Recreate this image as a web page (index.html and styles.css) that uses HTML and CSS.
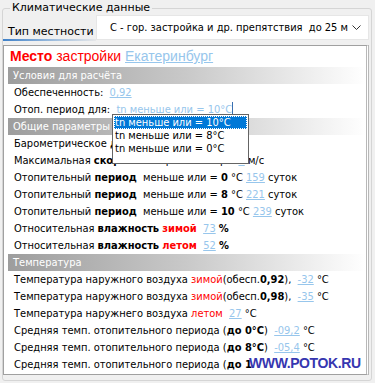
FILE: index.html
```html
<!DOCTYPE html>
<html lang="ru">
<head>
<meta charset="utf-8">
<link rel="stylesheet" href="styles.css">
</head>
<body>
<fieldset class="group">
  <legend class="legend">Климатические данные</legend>
  <div class="typebar">
    <div class="tab">Тип местности</div>
    <div class="combo">
      <span class="combo-text">С - гор. застройка и др. препятствия&nbsp; до 25 м</span>
      <svg class="chev" width="9" height="5" viewBox="0 0 9 5"><path d="M0.5 0.5 L4.5 4.5 L8.5 0.5" fill="none" stroke="#333" stroke-width="1"/></svg>
    </div>
  </div>
  <div class="panel">
    <div class="place"><b class="red">Место</b> <span class="red">застройки</span> <span class="link">Екатеринбург</span></div>

    <div class="head">Условия для расчёта</div>
    <div class="row">Обеспеченность:&nbsp; <span class="link">0,92</span></div>
    <div class="row">Отоп. период для:&nbsp; <span class="val">tn меньше или = 10°С</span><span class="caret"></span></div>

    <div class="head">Общие параметры</div>
    <div class="row">Барометрическое <b>давление</b> 990 гПа</div>
    <div class="row">Максимальная <b>скорость</b> ветра за январь&nbsp; <span class="link">4</span> м/с</div>
    <div class="row">Отопительный <b>период</b>&nbsp; меньше или = <b>0</b> °С <span class="link">159</span> суток</div>
    <div class="row">Отопительный <b>период</b>&nbsp; меньше или = <b>8</b> °С <span class="link">221</span> суток</div>
    <div class="row">Отопительный <b>период</b>&nbsp; меньше или = <b>10</b> °С <span class="link">239</span> суток</div>
    <div class="row">Относительная <b>влажность</b> <b class="red">зимой</b>&nbsp; <span class="link">73</span> <b>%</b></div>
    <div class="row">Относительная <b>влажность</b> <b class="red">летом</b>&nbsp; <span class="link">52</span> <b>%</b></div>

    <div class="head">Температура</div>
    <div class="row">Температура наружного воздуха <span class="red">зимой</span>(обесп.<b>0,92</b>),&nbsp; <span class="link">-32</span> °С</div>
    <div class="row">Температура наружного воздуха <span class="red">зимой</span>(обесп.<b>0,98</b>),&nbsp; <span class="link">-35</span> °С</div>
    <div class="row">Температура наружнего воздуха <span class="red">летом</span>&nbsp; <span class="link">27</span> °С</div>
    <div class="row">Средняя темп. отопительного периода (<b>до 0°С</b>)&nbsp; <span class="link">-09,2</span> °С</div>
    <div class="row">Средняя темп. отопительного периода (<b>до 8°С</b>)&nbsp; <span class="link">-05,4</span> °С</div>
    <div class="row">Средняя темп. отопительного периода (<b>до 1</b></div>

    <ul class="dropdown">
      <li class="sel">tn меньше или = 10°С</li>
      <li>tn меньше или = 8°С</li>
      <li>tn меньше или = 0°С</li>
    </ul>
    <div class="watermark">WWW.POTOK.RU</div>
  </div>
</fieldset>
</body>
</html>
```
FILE: styles.css
```css
html, body {
  margin: 0;
  padding: 0;
  background: #f0f0f0;
}
body {
  font-family: "DejaVu Sans Condensed", "DejaVu Sans", sans-serif;
  font-size: 11px;
  color: #000;
  width: 375px;
  height: 383px;
  overflow: hidden;
}
.group {
  margin: 2px 3px 0 2px;
  padding: 0;
  border: 1px solid #d5d5d5;
  border-radius: 3px;
  height: 379px;
  box-sizing: border-box;
  min-width: 0;
}
.legend {
  margin-left: 7px;
  padding: 0 2px 0 2px;
  line-height: 12px;
  color: #000;
  font-family: "DejaVu Sans", sans-serif;
}
.typebar {
  display: flex;
  align-items: flex-end;
  height: 31px;
  margin-top: -4px;
}
.tab {
  width: 93px;
  height: 18px;
  line-height: 18px;
  padding-left: 5px;
  box-sizing: border-box;
  font-family: "DejaVu Sans", sans-serif;
  border-bottom: 2px solid #5a8fc8;
  border-image: linear-gradient(to right, #3c7fc8, #a9c4e0 60%, #e8e8e8) 1;
}
.combo {
  flex: 1;
  height: 23px;
  margin-bottom: 1px;
  margin-right: 2px;
  background: #fff;
  border: 1px solid #e6e6e6;
  display: flex;
  align-items: center;
  padding: 0 7px 0 13px;
}
.combo-text { flex: 1; white-space: pre; }
.chev { display: block; }
.panel {
  position: relative;
  margin: 4px 2px 0 0;
  background: #fff;
  border: 1px solid #a0a0a0;
  border-right: 3px double #b8b8b8;
  height: 328px;
  padding: 0 0 0 4px;
}
.place {
  height: 21px;
  line-height: 21px;
  font-size: 14px;
  font-family: "Liberation Sans", Arial, sans-serif;
  padding-left: 2px;
}
.red { color: #ff0000; }
.place b.red { font-weight: bold; }
.link {
  color: #97c6ec;
  text-decoration: underline;
}
.val { color: #97c6ec; }
.caret {
  display: inline-block;
  width: 1px;
  height: 13px;
  background: #3a6fb0;
  vertical-align: -2px;
}
.head {
  height: 17px;
  line-height: 17px;
  padding-left: 5px;
  color: #fff;
  background: linear-gradient(to right, #9d9d9d 0%, #c9c9c9 50%, #ffffff 100%);
}
.row {
  height: 17px;
  line-height: 17px;
  padding-left: 6px;
  white-space: pre;
}
.dropdown {
  position: absolute;
  left: 108px;
  top: 68px;
  width: 133px;
  margin: 0;
  padding: 1px 1px 8px 1px;
  list-style: none;
  background: #fff;
  border: 1px solid #646464;
}
.dropdown li {
  height: 13px;
  line-height: 13px;
  padding-left: 1px;
}
.dropdown li.sel {
  background: #0078d7;
  color: #fff;
  outline: 1px dotted #fff;
  outline-offset: -1px;
}
.watermark {
  position: absolute;
  left: 245px;
  top: 309px;
  font-family: "Liberation Sans", Arial, sans-serif;
  font-weight: bold;
  font-size: 14px;
  line-height: 16px;
  color: #3636b0;
  letter-spacing: -0.4px;
}
```
